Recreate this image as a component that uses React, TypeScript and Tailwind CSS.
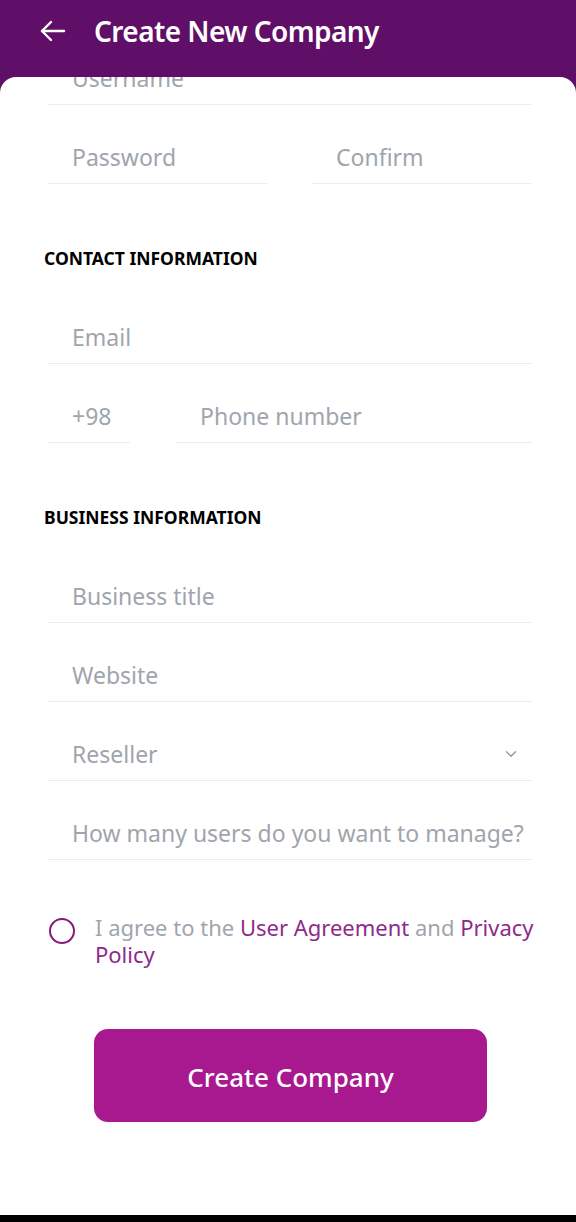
import { ChevronDown } from "lucide-react";

const font = { fontFamily: '"Noto Sans", "Open Sans", Arial, sans-serif' };

function Field({ label, className = "", children }: { label: string; className?: string; children?: React.ReactNode }) {
  return (
    <div className={`flex h-[53px] items-center justify-between border-b border-[#ececec] pl-6 ${className}`}>
      <span className="text-[23px] leading-none whitespace-nowrap text-[#a0a5ad]">{label}</span>
      {children}
    </div>
  );
}

function SectionTitle({ children }: { children: React.ReactNode }) {
  return (
    <h2 className="mt-[62px] ml-[44px] h-6 text-[17.5px] leading-6 font-bold text-black">
      {children}
    </h2>
  );
}

export default function App() {
  return (
    <div className="flex h-[1222px] w-full flex-col overflow-hidden bg-[#5f0f68]" style={font}>
      <header className="flex h-[77px] shrink-0 items-start px-10 pt-3">
        <div className="flex h-[38px] items-center gap-7">
          <svg width="26" height="22" viewBox="0 0 26 22" fill="none" stroke="white" strokeWidth="2.4" strokeLinecap="round" strokeLinejoin="round">
            <path d="M24 11H2" />
            <path d="M11 2 2 11l9 9" />
          </svg>
          <h1 className="text-[28px] leading-[38px] font-semibold tracking-[-0.02em] text-white">Create New Company</h1>
        </div>
      </header>

      <main className="flex-1 overflow-hidden rounded-t-2xl bg-white">
        <div className="-mt-[25px] flex flex-col">
          <Field label="Username" className="mr-11 ml-12" />
          <div className="mt-[26px] mr-11 ml-12 flex gap-11">
            <Field label="Password" className="flex-1" />
            <Field label="Confirm" className="flex-1" />
          </div>

          <SectionTitle>CONTACT INFORMATION</SectionTitle>
          <Field label="Email" className="mt-[41px] mr-11 ml-12" />
          <div className="mt-[26px] mr-11 ml-12 flex gap-[46px]">
            <Field label="+98" className="w-[82px]" />
            <Field label="Phone number" className="flex-1" />
          </div>

          <SectionTitle>BUSINESS INFORMATION</SectionTitle>
          <Field label="Business title" className="mt-[41px] mr-11 ml-12" />
          <Field label="Website" className="mt-[26px] mr-11 ml-12" />
          <Field label="Reseller" className="mt-[26px] mr-11 ml-12 pr-3">
            <ChevronDown size={18} strokeWidth={1.6} className="text-[#8c8f94]" />
          </Field>
          <Field label="How many users do you want to manage?" className="mt-[26px] mr-11 ml-12" />

          <label className="mt-[54px] mr-[38px] ml-[49px] flex items-start gap-5">
            <span className="mt-[4px] h-[26px] w-[26px] shrink-0 rounded-full border-2 border-[#861a7a]" />
            <span className="text-[22px] leading-[27px] text-[#a0a5ad]">
              I agree to the <span className="text-[#8e2a8a]">User Agreement</span> and{" "}
              <span className="text-[#8e2a8a]">Privacy Policy</span>
            </span>
          </label>

          <button className="mt-[61px] ml-[94px] flex h-[93px] w-[393px] items-center justify-center rounded-[14px] bg-[#a8198f] pt-1 text-[26px] font-medium text-white">
            Create Company
          </button>
        </div>
      </main>

      <div className="h-[7px] shrink-0 bg-black" />
    </div>
  );
}
